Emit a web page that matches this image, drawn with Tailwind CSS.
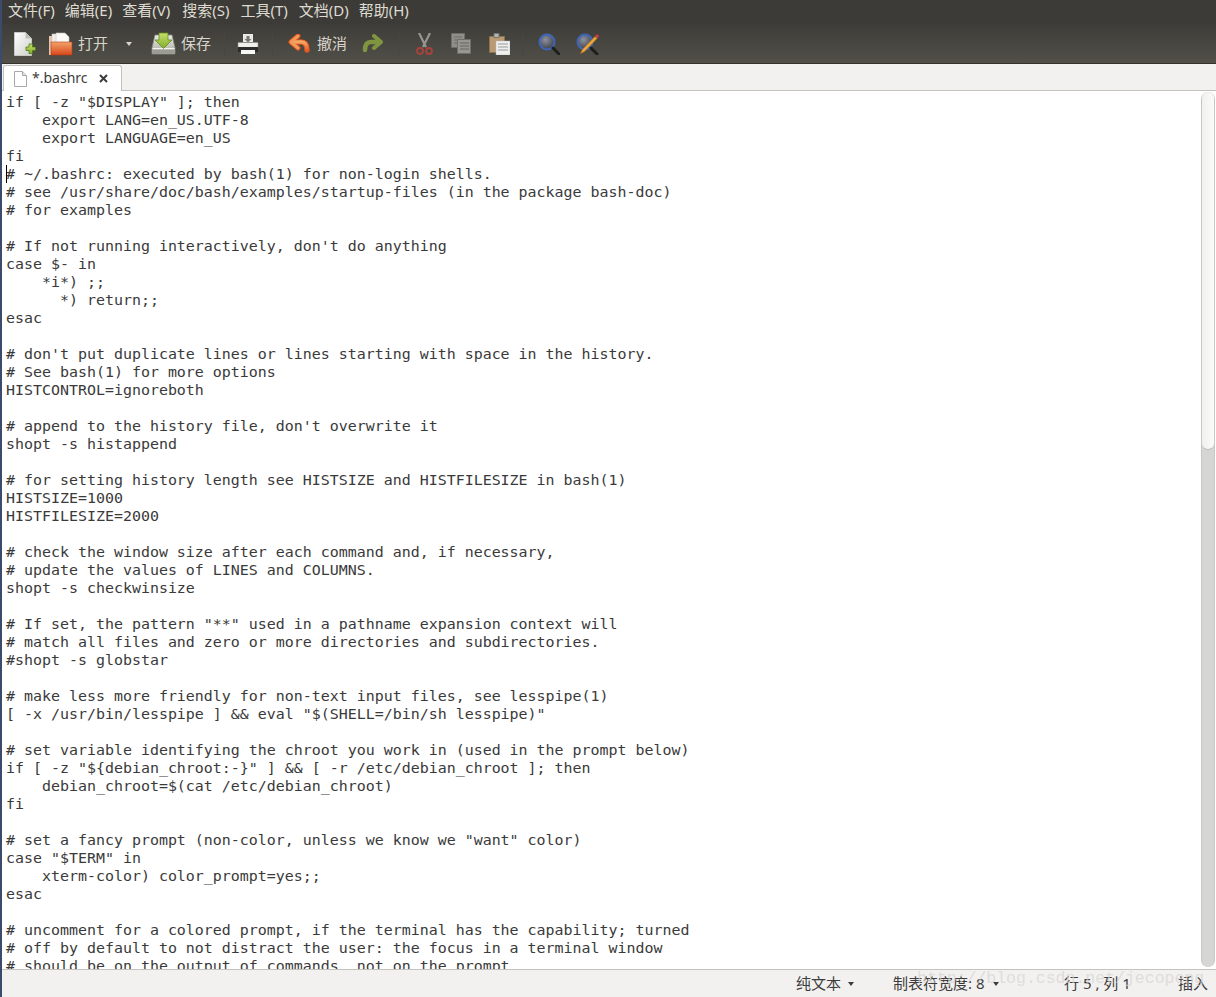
<!DOCTYPE html>
<html lang="en">
<head>
<meta charset="UTF-8">
<title>*.bashrc</title>
<script src="https://cdn.jsdelivr.net/npm/@tailwindcss/browser@4"></script>
</head>
<body class="w-[1216px] h-[997px] overflow-hidden bg-[#f2f1f0] font-['Noto_Sans','Noto_Sans_CJK_SC',sans-serif]">
<svg class="absolute w-0 h-0">
  <defs>
    <linearGradient id="paper" x1="0" y1="0" x2="1" y2="1"><stop offset="0" stop-color="#ffffff"/><stop offset="1" stop-color="#cfcfca"/></linearGradient>
    <linearGradient id="folder" x1="0" y1="0" x2="0" y2="1"><stop offset="0" stop-color="#f3a26c"/><stop offset="1" stop-color="#d8481a"/></linearGradient>
    <linearGradient id="disk" x1="0" y1="0" x2="0" y2="1"><stop offset="0" stop-color="#ecece6"/><stop offset="1" stop-color="#a9a9a2"/></linearGradient>
    <linearGradient id="arrow" x1="0" y1="0" x2="0" y2="1"><stop offset="0" stop-color="#c6de6a"/><stop offset="1" stop-color="#7fae2c"/></linearGradient>
    <linearGradient id="undo" x1="0" y1="0" x2="0" y2="1"><stop offset="0" stop-color="#f6a765"/><stop offset="1" stop-color="#e4622a"/></linearGradient>
    <radialGradient id="glass" cx=".4" cy=".35" r=".7"><stop offset="0" stop-color="#8d92a0"/><stop offset="1" stop-color="#3b3d44"/></radialGradient>
  </defs>
</svg>
<div class="flex flex-col h-[997px] border-l-2 border-[#3c4a6e]">

  <!-- menu bar -->
  <div class="flex items-center h-[24px] pb-[3px] pl-[6px] gap-[10px] bg-[#3c3b37] text-[#dfdbd2] text-[15px]">
    <span>文件(F)</span><span>编辑(E)</span><span>查看(V)</span><span class="ml-[2px]">搜索(S)</span><span class="ml-px">工具(T)</span><span class="ml-px">文档(D)</span><span>帮助(H)</span>
  </div>

  <!-- toolbar -->
  <div class="flex items-center h-[40px] bg-gradient-to-b from-[#3e3d39] to-[#514f48] border-b border-[#33322e] text-[#d8d4cb] text-[15px]">
    <svg class="ml-[11px] w-[23px] h-[26px]" viewBox="0 0 23 26"><path d="M1.500 1.500h11l6 6v17h-17z" fill="url(#paper)" stroke="#c9c9c4"/><path d="M12.500 1.500v6h6z" fill="#bdbdb8"/><path d="M13 16h3v-3h3.500v3h3v3.500h-3v3H16v-3h-3z" fill="url(#arrow)" stroke="#4f7a18" stroke-width=".8"/></svg>
    <svg class="ml-[12px] w-[25px] h-[24px]" viewBox="0 0 25 24"><path d="M1 4h4v19H1z" fill="#e4c4ac"/><path d="M4 2h8l2 2h0v8H4z" fill="#f2efe8" stroke="#c8c5be" stroke-width=".6"/><path d="M8 1h9l4 4v7H8z" fill="#fbfaf6" stroke="#c8c5be" stroke-width=".6"/><path d="M3 10h21v13H3z" fill="url(#folder)" stroke="#b33c14" stroke-width=".6"/></svg>
    <span class="ml-[5px] pb-px">打开</span>
    <span class="ml-[18px] w-0 h-0 border-x-[3px] border-x-transparent border-t-[4px] border-t-[#d8d4cb]"></span>
    <svg class="ml-[19px] w-[25px] h-[24px]" viewBox="0 0 25 24"><path d="M4 3h17l3 13v6H1v-6z" fill="url(#disk)" stroke="#8b8b85" stroke-width=".8"/><path d="M1.500 16.500h22" stroke="#f4f4f0"/><path d="M2 18h21v3.500H2z" fill="#9c9c96"/><path d="M8 1h9v7h4l-8.500 8.500L4 8h4z" fill="url(#arrow)" stroke="#5f8a1e" stroke-width=".8"/></svg>
    <span class="ml-[5px] pb-px">保存</span>
    <span class="ml-[13px] w-px h-[24px] bg-[#47463f]"></span>
    <svg class="ml-[12px] w-[22px] h-[22px]" viewBox="0 0 22 22"><path d="M6 1h10v8H6z" fill="#e8e8e6"/><path d="M9.500 3h3v3h2L11 9.500 7.500 6h2z" fill="#77776f"/><path d="M1 9.500h20V15H1z" fill="#efefec" stroke="#8a8a84" stroke-width=".6"/><path d="M1 14h20v5H1z" fill="#2c2c2a"/><path d="M4 17h14v4H4z" fill="#f6f6f4"/></svg>
    <span class="ml-[13px] w-px h-[24px] bg-[#47463f]"></span>
    <svg class="ml-[15px] w-[22px] h-[19px]" viewBox="0 0 22 19" fill="none"><path d="M4 8h9c4 0 6 3 6 8" stroke="#d9531f" stroke-width="5.500" stroke-linecap="round"/><path d="M10 2 3 8l7 6" stroke="#d9531f" stroke-width="5" stroke-linecap="round" stroke-linejoin="round"/><path d="M4 8h9c4 0 6 3 6 8" stroke="url(#undo)" stroke-width="3.500" stroke-linecap="round"/><path d="M10 2 3 8l7 6" stroke="#f39a58" stroke-width="3" stroke-linecap="round" stroke-linejoin="round"/></svg>
    <span class="ml-[7px] pb-px">撤消</span>
    <svg class="ml-[15px] w-[22px] h-[19px]" viewBox="0 0 22 19" fill="none"><path d="M18 8H9c-4 0-6 3-6 8" stroke="#7f9540" stroke-width="4.500" stroke-linecap="round"/><path d="M12 2l7 6-7 6" stroke="#7f9540" stroke-width="4" stroke-linecap="round" stroke-linejoin="round"/></svg>
    <span class="ml-[14px] w-px h-[24px] bg-[#47463f]"></span>
    <svg class="ml-[17px] w-[17px] h-[22px]" viewBox="0 0 17 22" fill="none"><path d="M3 0l7 14M14 0 7 14" stroke="#96958f" stroke-width="2.200"/><circle cx="4" cy="18" r="3" stroke="#a9423c" stroke-width="1.800"/><circle cx="13" cy="18" r="3" stroke="#a9423c" stroke-width="1.800"/></svg>
    <svg class="ml-[18px] w-[20px] h-[21px]" viewBox="0 0 20 21"><path d="M.5.500h13v14H.5z" fill="#8f8f8a" stroke="#6f6e68"/><path d="M3 4h8M3 7h8M3 10h8" stroke="#6f6e68"/><path d="M6.500 6.500h13v14h-13z" fill="#979792" stroke="#6f6e68"/><path d="M9 10h9M9 13h9M9 16h9" stroke="#66655f"/></svg>
    <svg class="ml-[18px] w-[21px] h-[22px]" viewBox="0 0 21 22"><path d="M.5 3.500h15v16H.5z" fill="#b99a72" stroke="#8c7350"/><path d="M5 .5h5v4H5z" fill="#b4b4b0" stroke="#77766f"/><path d="M7 8h14v14H7z" fill="#efefef" stroke="#bbb" stroke-width=".5"/><path d="M9 11h10M9 14h10M9 17h10" stroke="#999"/></svg>
    <span class="ml-[12px] w-px h-[24px] bg-[#47463f]"></span>
    <svg class="ml-[15px] w-[22px] h-[22px]" viewBox="0 0 22 22" fill="none"><circle cx="9" cy="9" r="7.500" fill="url(#glass)" stroke="#3f66b8" stroke-width="2"/><path d="M15 15l6 6" stroke="#1e1e1c" stroke-width="3" stroke-linecap="round"/></svg>
    <svg class="ml-[16px] w-[23px] h-[22px]" viewBox="0 0 23 22" fill="none"><circle cx="9" cy="9" r="7.500" fill="url(#glass)" stroke="#3f66b8" stroke-width="2"/><path d="M15 15l6 6" stroke="#1e1e1c" stroke-width="3" stroke-linecap="round"/><path d="M19 3.500 6.500 16.500l-2 4 4-2L21 5.500z" fill="#eea83a" stroke="#b5701c" stroke-width=".6"/><path d="M19 3l2.500 2.500L23 3l-1.500-2z" fill="#d23c3c"/></svg>
  </div>

  <!-- tab strip -->
  <div class="flex items-end h-[27px] bg-[#f2f1f0] border-b border-[#c4c2bd] pl-[1px]">
    <div class="flex items-center h-[26px] w-[119px] -mb-px bg-white border border-b-0 border-[#c4c2bd] rounded-t-[3px] text-[#3c3c3c] text-[14px]">
      <svg class="ml-[9px] w-[15px] h-[16px]" viewBox="0 0 15 16"><path d="M1.500.5h8l4 4v11h-12z" fill="#fff" stroke="#a8a8a8"/><path d="M9.500.5v4h4" fill="#e4e4e4" stroke="#a8a8a8"/></svg>
      <span class="ml-[4px] pb-[2px]">*.bashrc</span>
      <svg class="ml-[11px] w-[9px] h-[9px]" viewBox="0 0 9 9"><path d="M1 1l7 7M8 1 1 8" stroke="#3c3c3c" stroke-width="2"/></svg>
    </div>
  </div>

  <!-- editor -->
  <div class="flex flex-1 min-h-0 bg-white">
    <pre class="relative flex-1 overflow-hidden pl-[4px] pt-[2px] font-['DejaVu_Sans_Mono',monospace] text-[14.95px] leading-[18px] text-[#3a3a3a]"><span class="absolute left-[4px] top-[74px] w-px h-[18px] bg-black"></span>if [ -z "$DISPLAY" ]; then
    export LANG=en_US.UTF-8
    export LANGUAGE=en_US
fi
# ~/.bashrc: executed by bash(1) for non-login shells.
# see /usr/share/doc/bash/examples/startup-files (in the package bash-doc)
# for examples

# If not running interactively, don't do anything
case $- in
    *i*) ;;
      *) return;;
esac

# don't put duplicate lines or lines starting with space in the history.
# See bash(1) for more options
HISTCONTROL=ignoreboth

# append to the history file, don't overwrite it
shopt -s histappend

# for setting history length see HISTSIZE and HISTFILESIZE in bash(1)
HISTSIZE=1000
HISTFILESIZE=2000

# check the window size after each command and, if necessary,
# update the values of LINES and COLUMNS.
shopt -s checkwinsize

# If set, the pattern "**" used in a pathname expansion context will
# match all files and zero or more directories and subdirectories.
#shopt -s globstar

# make less more friendly for non-text input files, see lesspipe(1)
[ -x /usr/bin/lesspipe ] && eval "$(SHELL=/bin/sh lesspipe)"

# set variable identifying the chroot you work in (used in the prompt below)
if [ -z "${debian_chroot:-}" ] && [ -r /etc/debian_chroot ]; then
    debian_chroot=$(cat /etc/debian_chroot)
fi

# set a fancy prompt (non-color, unless we know we "want" color)
case "$TERM" in
    xterm-color) color_prompt=yes;;
esac

# uncomment for a colored prompt, if the terminal has the capability; turned
# off by default to not distract the user: the focus in a terminal window
# should be on the output of commands, not on the prompt</pre>
    <div class="w-[14px] mr-px mb-[2px] mt-px flex flex-col bg-[#d6d6d4] border-x border-[#c8c8c6] rounded-[7px]">
      <div class="h-[358px] bg-gradient-to-r from-[#f0f0ee] to-[#fbfbfa] border-b border-[#bdbdbb] rounded-[7px]"></div>
    </div>
  </div>

  <!-- status bar -->
  <div class="relative flex items-center h-[28px] bg-[#f2f1f0] border-t border-[#c4c2bd] text-[#3c3c3c] text-[15px]">
    <span class="absolute left-[915px] top-0 font-['Liberation_Mono',monospace] text-[16.5px] leading-[18px] text-[#d5d3d0]/70">http://blog.csdn.net/jecopeng</span>
    <span class="ml-[794px] w-[45px] whitespace-nowrap">纯文本</span>
    <span class="ml-[7px] w-0 h-0 border-x-[3px] border-x-transparent border-t-[4px] border-t-[#3c3c3c]"></span>
    <span class="ml-[39px] w-[92px] whitespace-nowrap">制表符宽度: 8</span>
    <span class="ml-[8px] w-0 h-0 border-x-[3px] border-x-transparent border-t-[4px] border-t-[#3c3c3c]"></span>
    <span class="ml-[65px] w-[66px] whitespace-nowrap">行 5 , 列 1</span>
    <span class="ml-[48px] whitespace-nowrap">插入</span>
  </div>
</div>
</body>
</html>
